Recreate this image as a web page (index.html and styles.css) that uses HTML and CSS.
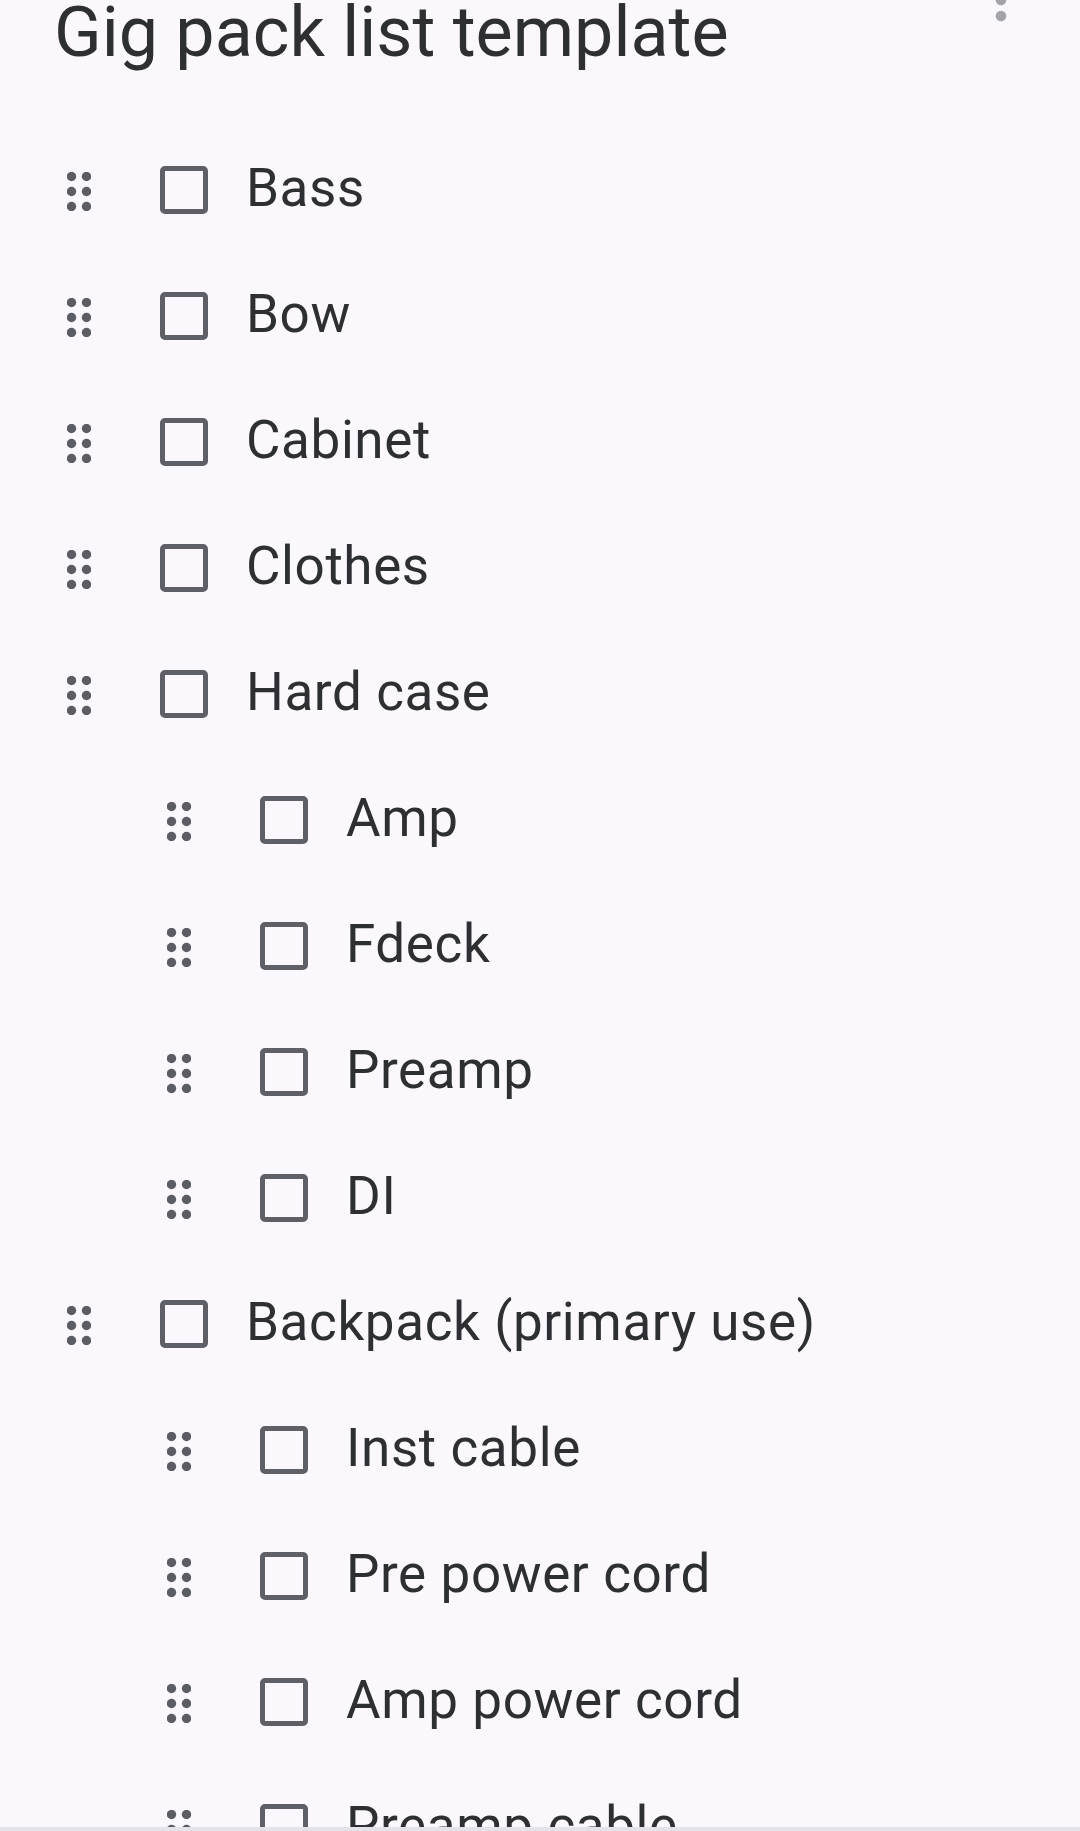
FILE: index.html
```html
<!DOCTYPE html>
<html>
<head>
<meta charset="utf-8">
<link rel="stylesheet" href="styles.css">
</head>
<body>
<div class="page">
  <header class="header">
    <h1 class="title">Gig pack list template</h1>
    <svg class="menu" width="12" height="44" viewBox="0 0 12 44"><circle cx="6" cy="6" r="5.3"/><circle cx="6" cy="22" r="5.3"/><circle cx="6" cy="38" r="5.3"/></svg>
  </header>
  <ul class="list">
    <li class="row"><svg class="handle" viewBox="0 0 24 39"><circle cx="4.5" cy="4.5" r="4.7"/><circle cx="19.5" cy="4.5" r="4.7"/><circle cx="4.5" cy="19.5" r="4.7"/><circle cx="19.5" cy="19.5" r="4.7"/><circle cx="4.5" cy="34.5" r="4.7"/><circle cx="19.5" cy="34.5" r="4.7"/></svg><span class="box"></span><span class="label">Bass</span></li>
    <li class="row"><svg class="handle" viewBox="0 0 24 39"><circle cx="4.5" cy="4.5" r="4.7"/><circle cx="19.5" cy="4.5" r="4.7"/><circle cx="4.5" cy="19.5" r="4.7"/><circle cx="19.5" cy="19.5" r="4.7"/><circle cx="4.5" cy="34.5" r="4.7"/><circle cx="19.5" cy="34.5" r="4.7"/></svg><span class="box"></span><span class="label">Bow</span></li>
    <li class="row"><svg class="handle" viewBox="0 0 24 39"><circle cx="4.5" cy="4.5" r="4.7"/><circle cx="19.5" cy="4.5" r="4.7"/><circle cx="4.5" cy="19.5" r="4.7"/><circle cx="19.5" cy="19.5" r="4.7"/><circle cx="4.5" cy="34.5" r="4.7"/><circle cx="19.5" cy="34.5" r="4.7"/></svg><span class="box"></span><span class="label">Cabinet</span></li>
    <li class="row"><svg class="handle" viewBox="0 0 24 39"><circle cx="4.5" cy="4.5" r="4.7"/><circle cx="19.5" cy="4.5" r="4.7"/><circle cx="4.5" cy="19.5" r="4.7"/><circle cx="19.5" cy="19.5" r="4.7"/><circle cx="4.5" cy="34.5" r="4.7"/><circle cx="19.5" cy="34.5" r="4.7"/></svg><span class="box"></span><span class="label">Clothes</span></li>
    <li class="row"><svg class="handle" viewBox="0 0 24 39"><circle cx="4.5" cy="4.5" r="4.7"/><circle cx="19.5" cy="4.5" r="4.7"/><circle cx="4.5" cy="19.5" r="4.7"/><circle cx="19.5" cy="19.5" r="4.7"/><circle cx="4.5" cy="34.5" r="4.7"/><circle cx="19.5" cy="34.5" r="4.7"/></svg><span class="box"></span><span class="label">Hard case</span></li>
    <li class="row sub"><svg class="handle" viewBox="0 0 24 39"><circle cx="4.5" cy="4.5" r="4.7"/><circle cx="19.5" cy="4.5" r="4.7"/><circle cx="4.5" cy="19.5" r="4.7"/><circle cx="19.5" cy="19.5" r="4.7"/><circle cx="4.5" cy="34.5" r="4.7"/><circle cx="19.5" cy="34.5" r="4.7"/></svg><span class="box"></span><span class="label">Amp</span></li>
    <li class="row sub"><svg class="handle" viewBox="0 0 24 39"><circle cx="4.5" cy="4.5" r="4.7"/><circle cx="19.5" cy="4.5" r="4.7"/><circle cx="4.5" cy="19.5" r="4.7"/><circle cx="19.5" cy="19.5" r="4.7"/><circle cx="4.5" cy="34.5" r="4.7"/><circle cx="19.5" cy="34.5" r="4.7"/></svg><span class="box"></span><span class="label">Fdeck</span></li>
    <li class="row sub"><svg class="handle" viewBox="0 0 24 39"><circle cx="4.5" cy="4.5" r="4.7"/><circle cx="19.5" cy="4.5" r="4.7"/><circle cx="4.5" cy="19.5" r="4.7"/><circle cx="19.5" cy="19.5" r="4.7"/><circle cx="4.5" cy="34.5" r="4.7"/><circle cx="19.5" cy="34.5" r="4.7"/></svg><span class="box"></span><span class="label">Preamp</span></li>
    <li class="row sub"><svg class="handle" viewBox="0 0 24 39"><circle cx="4.5" cy="4.5" r="4.7"/><circle cx="19.5" cy="4.5" r="4.7"/><circle cx="4.5" cy="19.5" r="4.7"/><circle cx="19.5" cy="19.5" r="4.7"/><circle cx="4.5" cy="34.5" r="4.7"/><circle cx="19.5" cy="34.5" r="4.7"/></svg><span class="box"></span><span class="label">DI</span></li>
    <li class="row"><svg class="handle" viewBox="0 0 24 39"><circle cx="4.5" cy="4.5" r="4.7"/><circle cx="19.5" cy="4.5" r="4.7"/><circle cx="4.5" cy="19.5" r="4.7"/><circle cx="19.5" cy="19.5" r="4.7"/><circle cx="4.5" cy="34.5" r="4.7"/><circle cx="19.5" cy="34.5" r="4.7"/></svg><span class="box"></span><span class="label">Backpack (primary use)</span></li>
    <li class="row sub"><svg class="handle" viewBox="0 0 24 39"><circle cx="4.5" cy="4.5" r="4.7"/><circle cx="19.5" cy="4.5" r="4.7"/><circle cx="4.5" cy="19.5" r="4.7"/><circle cx="19.5" cy="19.5" r="4.7"/><circle cx="4.5" cy="34.5" r="4.7"/><circle cx="19.5" cy="34.5" r="4.7"/></svg><span class="box"></span><span class="label">Inst cable</span></li>
    <li class="row sub"><svg class="handle" viewBox="0 0 24 39"><circle cx="4.5" cy="4.5" r="4.7"/><circle cx="19.5" cy="4.5" r="4.7"/><circle cx="4.5" cy="19.5" r="4.7"/><circle cx="19.5" cy="19.5" r="4.7"/><circle cx="4.5" cy="34.5" r="4.7"/><circle cx="19.5" cy="34.5" r="4.7"/></svg><span class="box"></span><span class="label">Pre power cord</span></li>
    <li class="row sub"><svg class="handle" viewBox="0 0 24 39"><circle cx="4.5" cy="4.5" r="4.7"/><circle cx="19.5" cy="4.5" r="4.7"/><circle cx="4.5" cy="19.5" r="4.7"/><circle cx="19.5" cy="19.5" r="4.7"/><circle cx="4.5" cy="34.5" r="4.7"/><circle cx="19.5" cy="34.5" r="4.7"/></svg><span class="box"></span><span class="label">Amp power cord</span></li>
    <li class="row sub"><svg class="handle" viewBox="0 0 24 39"><circle cx="4.5" cy="4.5" r="4.7"/><circle cx="19.5" cy="4.5" r="4.7"/><circle cx="4.5" cy="19.5" r="4.7"/><circle cx="19.5" cy="19.5" r="4.7"/><circle cx="4.5" cy="34.5" r="4.7"/><circle cx="19.5" cy="34.5" r="4.7"/></svg><span class="box"></span><span class="label">Preamp cable</span></li>
  </ul>
</div>
<div class="navbar"></div>
</body>
</html>
```

FILE: styles.css
```css
html, body {
  margin: 0;
  padding: 0;
  background: #faf8fd;
}
body {
  font-family: Roboto, "Noto Sans", sans-serif;
  color: #2e2f33;
  height: 1831px;
  overflow: hidden;
}
.page {
  width: 1080px;
}
.header {
  height: 127px;
  display: flex;
  justify-content: space-between;
  align-items: flex-start;
  padding: 0 73px 0 54px;
  box-sizing: border-box;
}
.title {
  margin: -3px 0 0 0;
  font-size: 70px;
  font-weight: 400;
  line-height: 1;
  letter-spacing: 0;
  color: #2e2f33;
}
.menu {
  fill: #a3a3aa;
  margin-top: -22px;
  flex: none;
}
.list {
  list-style: none;
  margin: 0;
  padding: 0;
}
.row {
  height: 126px;
  display: flex;
  align-items: center;
  padding-left: 67px;
}
.row.sub {
  padding-left: 167px;
}
.handle {
  width: 24px;
  height: 39px;
  fill: #5c5d64;
  flex: none;
  margin-top: 2px;
}
.box {
  width: 48px;
  height: 48px;
  box-sizing: border-box;
  border: 5.3px solid #5f6067;
  border-radius: 5px;
  margin-left: 69px;
  flex: none;
}
.label {
  margin-left: 38px;
  font-size: 53px;
  line-height: 1;
  letter-spacing: 0.6px;
  white-space: nowrap;
  margin-top: -3px;
}
.navbar {
  position: fixed;
  left: 0;
  right: 0;
  bottom: 0;
  height: 4px;
  background: #e5e3ea;
}
```
